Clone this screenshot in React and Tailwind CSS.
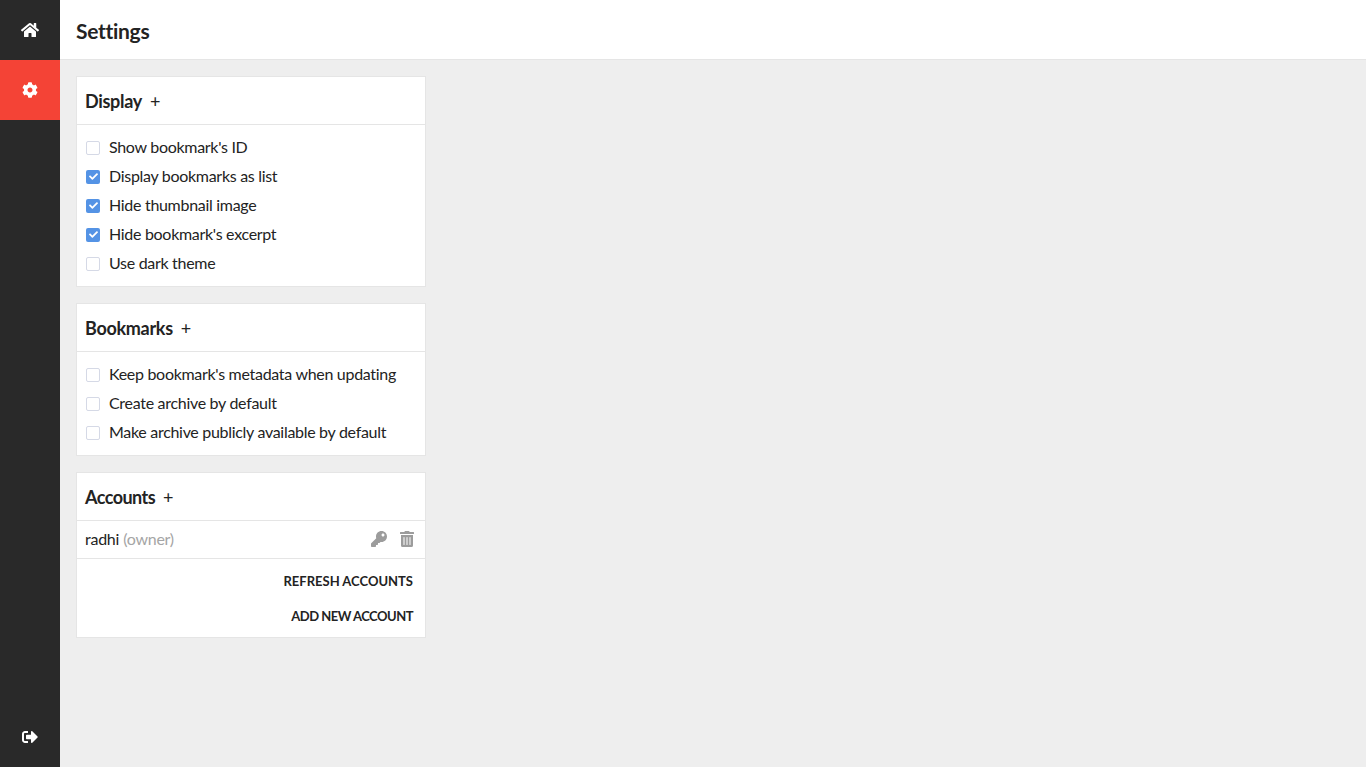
import React from "react";
import { FaHome, FaCog, FaSignOutAlt, FaKey, FaTrashAlt, FaCheck } from "react-icons/fa";

function Check({ label, checked }) {
  return (
    <label className="flex h-[29px] items-center pl-[9px] text-[16px] text-[#232323]">
      <span className={checked ? "mr-[9px] flex h-[14px] w-[14px] items-center justify-center rounded-[2px] bg-[#5493e5] text-white" : "mr-[9px] h-[14px] w-[14px] rounded-[2px] border border-[#d5d9e6] bg-white"}>
        {checked && <FaCheck className="h-[9px] w-[9px]" />}
      </span>
      <span className="pb-[2px] tracking-[-0.3px]">{label}</span>
    </label>
  );
}

function Card({ title, tight, children }) {
  return (
    <section className="w-[350px] border border-[#e5e5e5] bg-white">
      <h3 className="flex h-[47px] items-center border-b border-[#e5e5e5] px-2 text-[18px] font-bold text-[#232323] box-content">
        <span className={tight ? "pt-[2px] tracking-[-0.55px]" : "pt-[2px] tracking-[-0.3px]"}>{title}</span>
        <span className="ml-2 pt-[2px] font-normal">+</span>
      </h3>
      {children}
    </section>
  );
}

export default function App() {
  return (
    <div className="flex h-[767px] overflow-hidden bg-[#eeeeee] font-['Lato',sans-serif]">
      <nav className="flex w-[60px] shrink-0 flex-col bg-[#292929] text-white">
        <div className="flex h-[60px] items-center justify-center"><FaHome className="h-[18px] w-[18px]" /></div>
        <div className="flex h-[60px] items-center justify-center bg-[#f44336]"><FaCog className="h-4 w-4" /></div>
        <div className="mt-auto flex h-[60px] items-center justify-center"><FaSignOutAlt className="h-4 w-4" /></div>
      </nav>
      <main className="flex min-w-0 flex-1 flex-col">
        <header className="flex h-[60px] items-center border-b border-[#e5e5e5] bg-white px-4">
          <h1 className="pt-[2px] text-[21px] font-bold tracking-[-0.3px] text-[#232323]">Settings</h1>
        </header>
        <div className="flex flex-col gap-4 p-4">
          <Card title="Display">
            <div className="py-2">
              <Check label="Show bookmark's ID" />
              <Check label="Display bookmarks as list" checked />
              <Check label="Hide thumbnail image" checked />
              <Check label="Hide bookmark's excerpt" checked />
              <Check label="Use dark theme" />
            </div>
          </Card>
          <Card title="Bookmarks">
            <div className="py-2">
              <Check label="Keep bookmark's metadata when updating" />
              <Check label="Create archive by default" />
              <Check label="Make archive publicly available by default" />
            </div>
          </Card>
          <Card title="Accounts" tight>
            <div className="flex h-[35px] items-center border-b border-[#e5e5e5] px-2 pb-[2px] text-[16px] box-content">
              <span className="tracking-[-0.25px] text-[#232323]">radhi</span>
              <span className="ml-1 tracking-[-0.25px] text-[#a5a5a5]">(owner)</span>
              <FaKey className="ml-auto h-4 w-4 text-[#9c9c9c]" />
              <FaTrashAlt className="ml-[13px] mr-[3px] h-4 w-[14px] text-[#9c9c9c]" />
            </div>
            <div className="flex flex-col items-end pb-[3px] pr-3 text-[13px] font-bold text-[#232323]">
              <div className="flex h-[35px] items-center pt-[5px] box-content">REFRESH ACCOUNTS</div>
              <div className="flex h-[35px] items-center tracking-[-0.5px]">ADD NEW ACCOUNT</div>
            </div>
          </Card>
        </div>
      </main>
    </div>
  );
}
